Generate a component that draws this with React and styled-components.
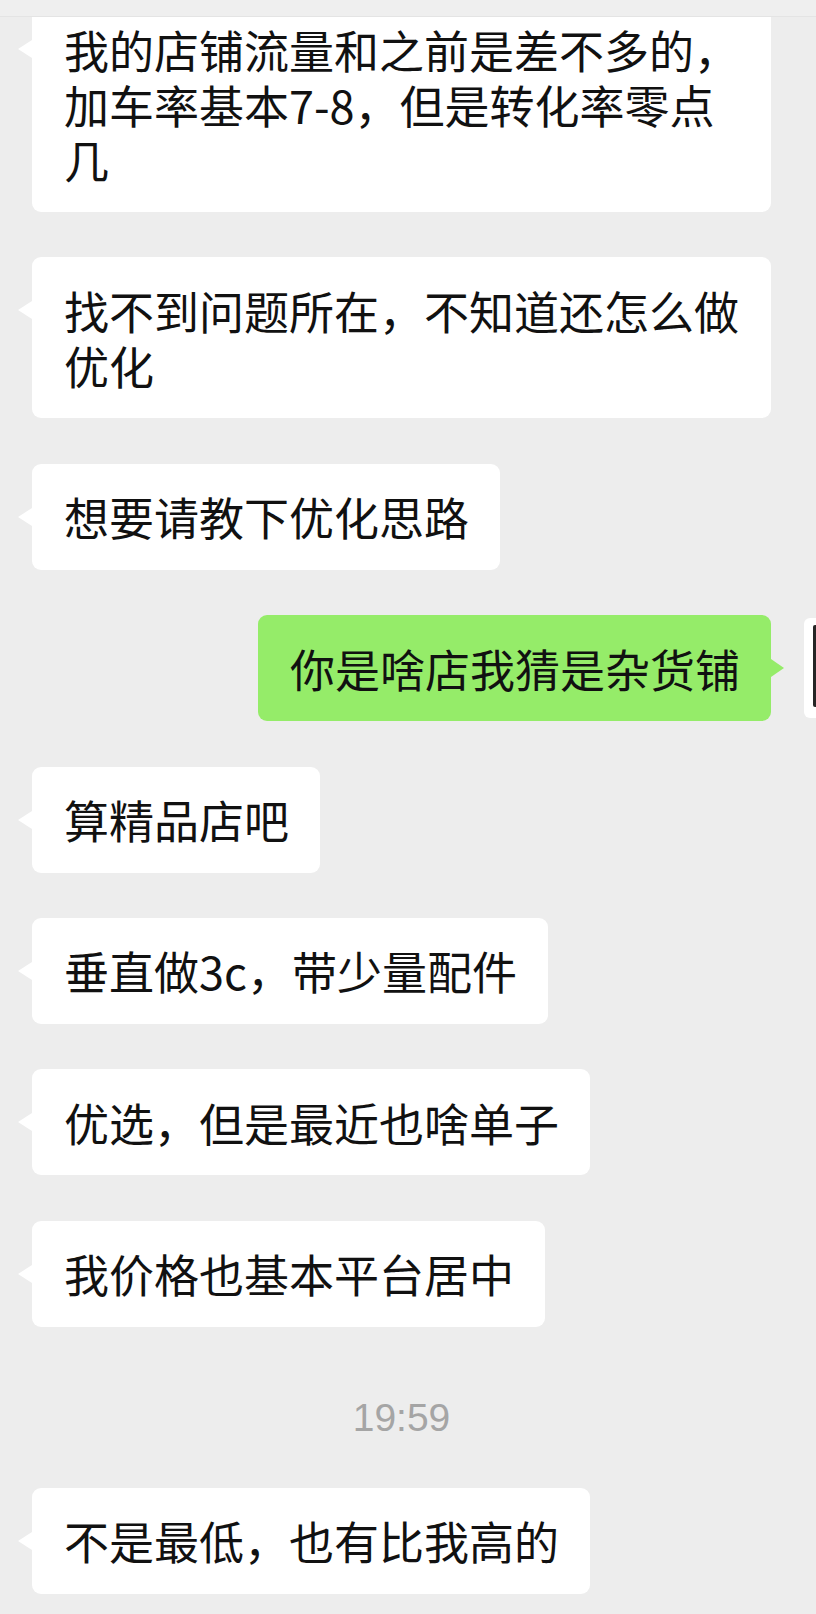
import styled, { createGlobalStyle } from "styled-components";

const messages = [
  { id: 1, text: "我的店铺流量和之前是差不多的，加车率基本7-8，但是转化率零点几" },
  { id: 2, text: "找不到问题所在，不知道还怎么做优化" },
  { id: 3, text: "想要请教下优化思路" },
  { id: 4, text: "你是啥店我猜是杂货铺", self: true },
  { id: 5, text: "算精品店吧" },
  { id: 6, text: "垂直做3c，带少量配件" },
  { id: 7, text: "优选，但是最近也啥单子" },
  { id: 8, text: "我价格也基本平台居中" },
  { id: 9, time: "19:59" },
  { id: 10, text: "不是最低，也有比我高的" },
];

export default function App() {
  return (
    <>
      <GlobalStyle />
      <Page>
        <TopBar />
        <Chat>
          {messages.map((m) => {
            if (m.time) return <TimeRow key={m.id}>{m.time}</TimeRow>;
            if (m.self)
              return (
                <SelfRow key={m.id}>
                  <Bubble $self>{m.text}</Bubble>
                  <Avatar>
                    <AvatarPic />
                  </Avatar>
                </SelfRow>
              );
            return <Bubble key={m.id}>{m.text}</Bubble>;
          })}
        </Chat>
      </Page>
    </>
  );
}

const GlobalStyle = createGlobalStyle`
  html, body {
    margin: 0;
    padding: 0;
    background: #ededed;
    overflow: hidden;
  }
  body {
    font-family: "Noto Sans CJK SC", "Noto Sans", sans-serif;
  }
`;

const Page = styled.div`
  width: 816px;
  height: 1614px;
  overflow: hidden;
  background: #ededed;
`;

const TopBar = styled.div`
  position: relative;
  z-index: 2;
  height: 16px;
  background: #efefef;
  border-bottom: 1px solid #e4e4e4;
`;

const Chat = styled.div`
  display: flex;
  flex-direction: column;
  gap: 45.4px;
  margin-top: -21px;
  padding: 0 45px 0 32px;
`;

const Bubble = styled.div`
  position: relative;
  align-self: ${(p) => (p.$self ? "auto" : "flex-start")};
  box-sizing: border-box;
  max-width: 100%;
  padding: 25.5px 31px 25.5px 32px;
  font-size: 45px;
  line-height: 55px;
  color: #111;
  background: ${(p) => (p.$self ? "#95ec69" : "#ffffff")};
  border-radius: 9px;

  &::before {
    content: "";
    position: absolute;
    top: 44px;
    width: 0;
    height: 0;
    border-top: 9px solid transparent;
    border-bottom: 9px solid transparent;
    ${(p) =>
      p.$self
        ? "right: -13px; border-left: 13px solid #95ec69;"
        : "left: -14px; border-right: 14px solid #ffffff;"}
  }
`;

const SelfRow = styled.div`
  display: flex;
  align-items: flex-start;
  justify-content: flex-end;
  gap: 33px;
  margin-right: -133px;
`;

const Avatar = styled.div`
  flex-shrink: 0;
  box-sizing: border-box;
  width: 100px;
  height: 100px;
  margin-top: 3px;
  padding: 7px 0 11px 9px;
  background: #fff;
  border-radius: 6px;
`;

const AvatarPic = styled.div`
  height: 100%;
  background: #262626;
  border-radius: 2px;
`;

const TimeRow = styled.div`
  padding: 26px 0 5px;
  text-align: center;
  font-family: "Liberation Sans", Arial, sans-serif;
  font-size: 39px;
  line-height: 39px;
  color: #a5a5a5;
`;
